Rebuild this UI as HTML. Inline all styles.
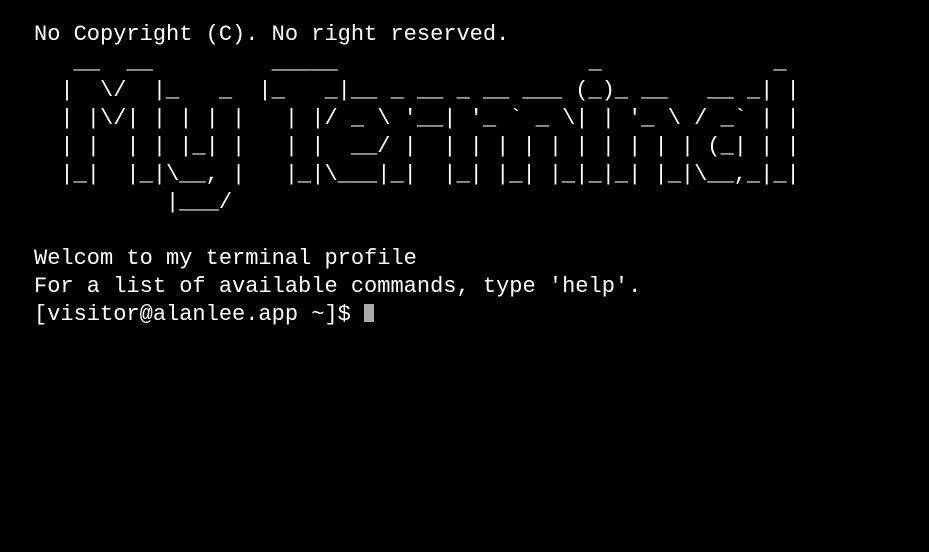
<!DOCTYPE html>
<html><head><meta charset="utf-8"><style>
html,body{margin:0;background:#000;width:929px;height:552px;overflow:hidden}
pre{margin:0;position:absolute;left:34px;top:21px;color:#fff;font-family:"Liberation Mono",monospace;font-size:22px;line-height:28px}
.cur{display:inline-block;width:10px;height:18px;background:#aaa;vertical-align:-2px}
</style></head><body><pre>No Copyright (C). No right reserved.
   __  __         _____                   _             _ 
  |  \/  |_   _  |_   _|__ _ __ _ __ ___ (_)_ __   __ _| |
  | |\/| | | | |   | |/ _ \ '__| '_ ` _ \| | '_ \ / _` | |
  | |  | | |_| |   | |  __/ |  | | | | | | | | | | (_| | |
  |_|  |_|\__, |   |_|\___|_|  |_| |_| |_|_|_| |_|\__,_|_|
          |___/                                           

Welcom to my terminal profile
For a list of available commands, type 'help'.
[visitor@alanlee.app ~]$ <span class="cur"></span></pre></body></html>
